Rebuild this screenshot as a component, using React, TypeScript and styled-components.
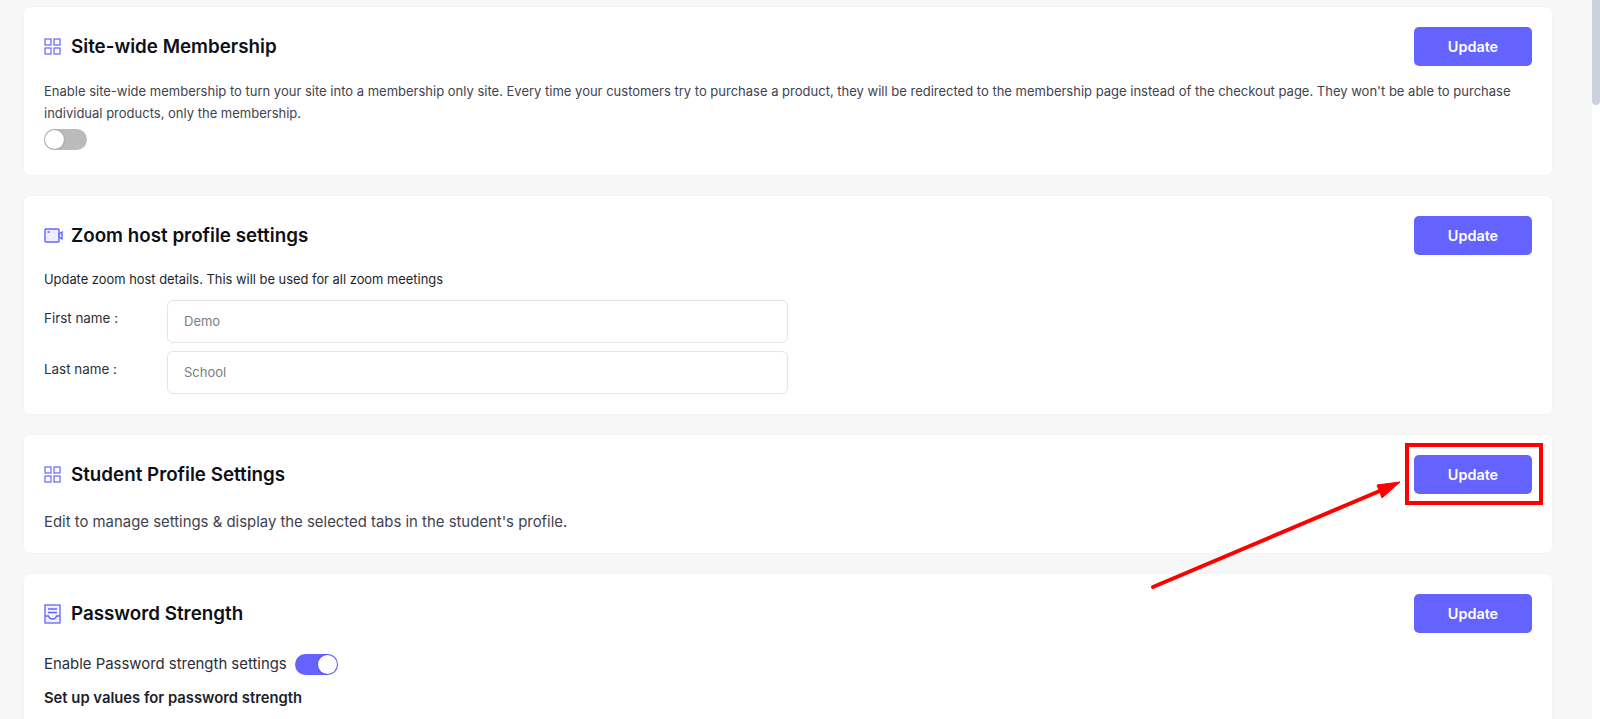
import styled, { createGlobalStyle } from 'styled-components';
import type { ReactNode } from 'react';

const GlobalStyle = createGlobalStyle`
  html, body {
    margin: 0;
    height: 100%;
    overflow: hidden;
    background: #f7f7f8;
    font-family: 'Inter', 'Noto Sans', sans-serif;
    color: #1d1f2c;
  }
  * { box-sizing: border-box; }
`;

const GridIcon = () => (
  <svg width="17" height="17" viewBox="0 0 17 17" fill="none" stroke="#6563ff" strokeWidth="1.2">
    <rect x="1" y="1" width="6" height="6" />
    <rect x="10" y="1" width="6" height="6" />
    <rect x="1" y="10" width="6" height="6" />
    <rect x="10" y="10" width="6" height="6" />
  </svg>
);

const VideoIcon = () => (
  <svg width="20" height="17" viewBox="0 0 20 17" fill="none" stroke="#6563ff" strokeWidth="1.4">
    <rect x="1" y="2" width="14" height="13" rx="1" fill="#eeeeff" />
    <path d="M3.5 5h2.5" />
    <path d="M15 7l3-2v7l-3-2z" fill="#eeeeff" />
  </svg>
);

const DocIcon = () => (
  <svg width="17" height="20" viewBox="0 0 17 20" fill="none" stroke="#6563ff" strokeWidth="1.3">
    <rect x="1" y="1" width="15" height="18" fill="#f3f3ff" />
    <path d="M4 5h9M4 8.5h9" />
    <path d="M1 12h3.500c.5 2 1.800 3 4 3s3.500-1 4-3H16" />
  </svg>
);

const Card = ({ icon, title, children }: { icon: ReactNode; title: string; children: ReactNode }) => (
  <CardBox>
    <CardHeader>
      <CardTitle>
        <IconSlot>{icon}</IconSlot>
        {title}
      </CardTitle>
      <UpdateButton>Update</UpdateButton>
    </CardHeader>
    {children}
  </CardBox>
);

export default function App() {
  return (
    <Page>
      <GlobalStyle />
      <Content>
        <Card icon={<GridIcon />} title="Site-wide Membership">
          <MembershipText>
            Enable site-wide membership to turn your site into a membership only site. Every time your customers try to
            purchase a product, they will be redirected to the membership page instead of the checkout page. They won't
            be able to purchase individual products, only the membership.
          </MembershipText>
          <Toggle />
          <ToggleSpacer />
        </Card>

        <Card icon={<VideoIcon />} title="Zoom host profile settings">
          <ZoomText>Update zoom host details. This will be used for all zoom meetings</ZoomText>
          <FieldList>
            <Field>
              <FieldLabel>First name :</FieldLabel>
              <FieldInput placeholder="Demo" />
            </Field>
            <Field>
              <FieldLabel>Last name :</FieldLabel>
              <FieldInput placeholder="School" />
            </Field>
          </FieldList>
        </Card>

        <Card icon={<GridIcon />} title="Student Profile Settings">
          <StudentText>Edit to manage settings &amp; display the selected tabs in the student's profile.</StudentText>
        </Card>

        <Card icon={<DocIcon />} title="Password Strength">
          <ToggleRow>
            Enable Password strength settings
            <Toggle $on />
          </ToggleRow>
          <SubHeading>Set up values for password strength</SubHeading>
        </Card>
      </Content>

      <ScrollTrack>
        <ScrollThumb />
      </ScrollTrack>

      <HighlightBox />
      <ArrowDrawing viewBox="0 0 1600 719">
        <path d="M1153 587L1382 490" stroke="#ff0000" strokeWidth="4" strokeLinecap="round" />
        <path d="M1400 482L1377 485L1382 498Z" fill="#ff0000" stroke="#ff0000" />
      </ArrowDrawing>
    </Page>
  );
}

const Page = styled.div`
  position: relative;
  display: flex;
  height: 100vh;
  overflow: hidden;
`;

const Content = styled.main`
  flex: 1;
  min-width: 0;
  display: flex;
  flex-direction: column;
  gap: 21px;
  padding: 7px 40px 0 24px;
`;

const ScrollTrack = styled.div`
  flex-shrink: 0;
  width: 8px;
  background: #ffffff;
`;

const ScrollThumb = styled.div`
  height: 105px;
  border-radius: 0 0 4px 4px;
  background: #cdd1dc;
`;

const CardBox = styled.section`
  flex-shrink: 0;
  padding: 20px;
  background: #ffffff;
  border-radius: 6px;
  box-shadow: 0 0 2px rgba(30, 30, 60, 0.05);
`;

const CardHeader = styled.header`
  display: flex;
  align-items: center;
  justify-content: space-between;
`;

const CardTitle = styled.h2`
  display: flex;
  align-items: center;
  margin: 0;
  font-size: 18.8px;
  font-weight: 600;
  color: #0e0f17;
`;

const IconSlot = styled.span`
  display: flex;
  justify-content: flex-start;
  width: 20px;
  margin-right: 7px;
`;

const UpdateButton = styled.button`
  width: 118px;
  height: 39px;
  border: none;
  border-radius: 5px;
  background: #6563ff;
  color: #ffffff;
  font-family: inherit;
  font-size: 14.4px;
  font-weight: 600;
`;

const MembershipText = styled.p`
  margin: 14px 0 5px;
  font-size: 13px;
  line-height: 22px;
  color: #41434e;
`;

const ZoomText = styled.p`
  margin: 14px 0 9px;
  font-size: 12.9px;
  line-height: 22px;
  color: #1d1f2c;
`;

const StudentText = styled.p`
  margin: 17px 0 0;
  font-size: 14.9px;
  line-height: 22px;
  color: #41434e;
`;

const FieldList = styled.div`
  display: flex;
  flex-direction: column;
  gap: 8px;
`;

const Field = styled.label`
  display: flex;
  align-items: flex-start;
`;

const FieldLabel = styled.span`
  width: 123px;
  padding-top: 7px;
  font-size: 13.4px;
  line-height: 22px;
  color: #2c2e3a;
`;

const FieldInput = styled.input`
  width: 621px;
  height: 43px;
  padding: 0 16px 2px;
  border: 1px solid #e4e5e9;
  border-radius: 6px;
  background: #ffffff;
  font-family: inherit;
  font-size: 13px;

  &::placeholder {
    color: #7a7c86;
  }
`;

const Toggle = styled.span<{ $on?: boolean }>`
  position: relative;
  display: block;
  flex-shrink: 0;
  width: 43px;
  height: 21px;
  border-radius: 11px;
  background: ${(p) => (p.$on ? '#6563ff' : '#bbbbbb')};

  &::after {
    content: '';
    position: absolute;
    top: 1px;
    left: ${(p) => (p.$on ? '23px' : '1px')};
    width: 19px;
    height: 19px;
    border-radius: 50%;
    background: #ffffff;
    box-shadow: 0 0 2px rgba(0, 0, 0, 0.3);
  }
`;

const ToggleSpacer = styled.div`
  height: 5px;
`;

const ToggleRow = styled.div`
  display: flex;
  align-items: center;
  gap: 8px;
  margin-top: 20px;
  font-size: 14.9px;
  line-height: 22px;
  color: #2c2e3a;
`;

const SubHeading = styled.h3`
  margin: 12px 0 0;
  font-size: 14.8px;
  font-weight: 600;
  line-height: 22px;
  color: #1d1f2c;
`;

const HighlightBox = styled.div`
  position: absolute;
  top: 443px;
  left: 1405px;
  width: 138px;
  height: 62px;
  border: 4px solid #ff0000;
  pointer-events: none;
`;

const ArrowDrawing = styled.svg`
  position: absolute;
  top: 0;
  left: 0;
  width: 1600px;
  height: 719px;
  pointer-events: none;
`;
